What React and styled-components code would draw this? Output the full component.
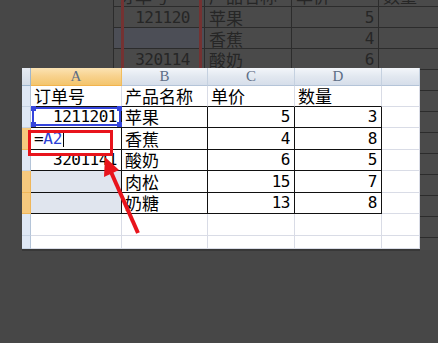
import React from "react"
import styled, { createGlobalStyle } from "styled-components"

const cjk = `"Noto Sans CJK SC", "Noto Sans", sans-serif`
const mono = `"DejaVu Sans Mono", "Liberation Mono", monospace`

const GlobalStyle = createGlobalStyle`
  * { box-sizing: border-box; }
  html, body {
    margin: 0;
    padding: 0;
    background: #474747;
  }
`

const Stage = styled.div`
  display: grid;
  width: 438px;
  height: 343px;
  overflow: hidden;
  background: #474747;
`

/* faded picture of the same sheet, lying behind the window */
const Ghost = styled.div`
  grid-area: 1 / 1;
  position: relative;
  margin-left: 113px;
  height: 250px;
  overflow: hidden;
  background: #4a4a4a;
  border-left: 1px solid #2c2c2c;
  display: grid;
  grid-template-columns: 91px 87px 87px 87px;
  grid-template-rows: 7px repeat(12, 21px);
  align-content: start;
`

const GhostCell = styled.div`
  display: flex;
  align-items: ${p => (p.$clip ? "flex-end" : "center")};
  justify-content: ${p => (p.$num ? "flex-end" : "flex-start")};
  padding: ${p => (p.$num ? `0 ${p.$pad || 4}px 0 0` : "0 0 0 4px")};
  overflow: hidden;
  background: ${p => (p.$tint ? "#4c4e56" : "transparent")};
  border-right: 1px solid #2c2c2c;
  border-bottom: 1px solid #2c2c2c;
  color: #262626;
  font-family: ${p => (p.$num ? mono : cjk)};
  font-size: ${p => (p.$num ? "16px" : "17px")};
  letter-spacing: ${p => (p.$num ? "-0.5px" : "0")};
  line-height: 21px;
  white-space: nowrap;
`

const GhostMark = styled.span`
  position: absolute;
  left: 7px;
  top: -4px;
  width: 81px;
  height: 84px;
  border: 3px solid #743232;
`

const Sheet = styled.div`
  grid-area: 1 / 1;
  align-self: start;
  justify-self: start;
  position: relative;
  margin: 68px 0 0 22px;
  width: 398px;
  background: #fff;
  display: grid;
  grid-template-columns: 9px 91px 86px 87px 87px 38px;
  grid-template-rows: 18px 21px 21px 22px 21px 22px 21px 22px 13px;
  border-bottom: 2px solid #383838;
  overflow: hidden;
`

const Corner = styled.div`
  background: linear-gradient(#e6ebf2, #d3dbe6);
  border-right: 1px solid #9eb6ce;
  border-bottom: 1px solid #9eb6ce;
`

const ColHead = styled.div`
  display: flex;
  align-items: center;
  justify-content: center;
  background: ${p =>
    p.$active
      ? "linear-gradient(#fbe3b4, #f8d390 45%, #f3c56d)"
      : "linear-gradient(#f3f6fa, #e2e8f0 50%, #d6deea)"};
  border-right: 1px solid ${p => (p.$active ? "#f1bd5d" : "#c5d1e0")};
  border-bottom: 1px solid ${p => (p.$active ? "#f2b34c" : "#b4c4d8")};
  color: #5d6e86;
  font-family: "Liberation Serif", serif;
  font-size: 15px;
  line-height: 1;
`

const RowHead = styled.div`
  background: ${p => (p.$active ? "#f6c97e" : "#dfe8f5")};
  border-right: 1px solid ${p => (p.$active ? "#efb65a" : "#b4c4d8")};
  border-bottom: 1px solid ${p => (p.$active ? "#efb65a" : "#c6d3e4")};
`

const Cell = styled.div`
  position: relative;
  display: flex;
  align-items: center;
  justify-content: ${p => (p.$num ? "flex-end" : "flex-start")};
  padding: ${p => (p.$num ? "0 4px 0 0" : "0 0 0 3px")};
  background: ${p => (p.$shade ? "#e0e5ee" : "#fff")};
  border-right: 1px solid ${p => (p.$boxed ? "#111" : "#d9dce6")};
  border-bottom: 1px solid ${p => (p.$boxed || p.$edge ? "#111" : "#d9dce6")};
  color: #000;
  font-family: ${p => (p.$num ? mono : cjk)};
  font-size: ${p => (p.$num ? "16px" : "17px")};
  letter-spacing: ${p => (p.$num ? "-0.5px" : "0")};
  line-height: 20px;
  white-space: nowrap;
`

const Formula = styled.span`
  display: flex;
  align-items: center;
  font-family: ${mono};
  font-size: 16px;
  letter-spacing: -0.3px;
  color: #000;
`

const RefName = styled.span`
  color: #2b3fd6;
`

const Caret = styled.i`
  display: inline-block;
  width: 1px;
  height: 17px;
  margin-left: 1px;
  background: #000;
`

const RefBox = styled.span`
  position: absolute;
  top: 0;
  left: 1px;
  right: 0;
  bottom: 1px;
  border: 2px solid #3444dc;
`

const Handle = styled.i`
  position: absolute;
  width: 5px;
  height: 5px;
  background: #3444dc;
  ${p => (p.$top ? "top: -3px;" : "bottom: -3px;")}
  ${p => (p.$left ? "left: -3px;" : "right: -3px;")}
`

const RedBox = styled.span`
  position: absolute;
  left: -3px;
  top: 2px;
  width: 85px;
  height: 26px;
  border: 3px solid #e8141c;
  z-index: 2;
`

const Arrow = styled.svg`
  position: absolute;
  left: 0;
  top: 0;
  z-index: 3;
  pointer-events: none;
`

const ghostRows = [
  { a: "订单号", b: "产品名称", c: "单价", d: "数量", clip: true },
  { a: "121120", b: "苹果", c: "5", d: "" },
  { a: "", b: "香蕉", c: "4", d: "", tint: true },
  { a: "320114", b: "酸奶", c: "6", d: "" },
  { a: "", b: "肉松", c: "15", d: "" },
  { a: "", b: "奶糖", c: "13", d: "" },
  {}, {}, {}, {}, {}, {}, {},
]

const rows = [
  { a: "订单号", b: "产品名称", c: "单价", d: "数量", label: true },
  { a: "1211201", b: "苹果", c: "5", d: "3", ref: true },
  { a: "=A2", b: "香蕉", c: "4", d: "8", editing: true, active: true },
  { a: "3201141", b: "酸奶", c: "6", d: "5" },
  { a: "", b: "肉松", c: "15", d: "7", active: true, shade: true },
  { a: "", b: "奶糖", c: "13", d: "8", active: true, shade: true },
  {},
  {},
]

const columns = ["A", "B", "C", "D", ""]

const GhostSheet = () => (
  <Ghost>
    {ghostRows.map((r, i) => (
      <React.Fragment key={i}>
        <GhostCell $num={!r.clip} $pad={14} $tint={r.tint} $clip={r.clip}>{r.a}</GhostCell>
        <GhostCell $clip={r.clip}>{r.b}</GhostCell>
        <GhostCell $num={!r.clip} $clip={r.clip}>{r.c}</GhostCell>
        <GhostCell $clip={r.clip}>{r.d}</GhostCell>
      </React.Fragment>
    ))}
    <GhostMark />
  </Ghost>
)

const ColumnA = ({ row, index }) => {
  const boxed = index >= 1 && index <= 5
  if (row.label) return <Cell $edge>{row.a}</Cell>
  if (row.editing) {
    return (
      <Cell $boxed={boxed}>
        <Formula>
          =<RefName>A2</RefName>
          <Caret />
        </Formula>
        <RedBox />
      </Cell>
    )
  }
  return (
    <Cell $num $boxed={boxed} $shade={row.shade}>
      {row.a}
      {row.ref && (
        <RefBox>
          <Handle $top $left />
          <Handle $top />
          <Handle $left />
          <Handle />
        </RefBox>
      )}
    </Cell>
  )
}

const App = () => (
  <>
    <GlobalStyle />
    <Stage>
      <GhostSheet />
      <Sheet>
        <Corner />
        {columns.map((c, i) => (
          <ColHead key={i} $active={c === "A"}>{c}</ColHead>
        ))}
        {rows.map((r, i) => {
          const boxed = i >= 1 && i <= 5
          return (
            <React.Fragment key={i}>
              <RowHead $active={r.active} />
              <ColumnA row={r} index={i} />
              <Cell $boxed={boxed} $edge={r.label}>{r.b}</Cell>
              <Cell $num={!r.label} $boxed={boxed} $edge={r.label}>{r.c}</Cell>
              <Cell $num={!r.label} $boxed={boxed} $edge={r.label}>{r.d}</Cell>
              <Cell />
            </React.Fragment>
          )
        })}
        <Arrow width="398" height="181" viewBox="0 0 398 181">
          <line x1="89" y1="104" x2="116" y2="165" stroke="#e8141c" strokeWidth="4" />
          <polygon points="83,89 82,109 97,102" fill="#e8141c" />
        </Arrow>
      </Sheet>
    </Stage>
  </>
)

export default App
